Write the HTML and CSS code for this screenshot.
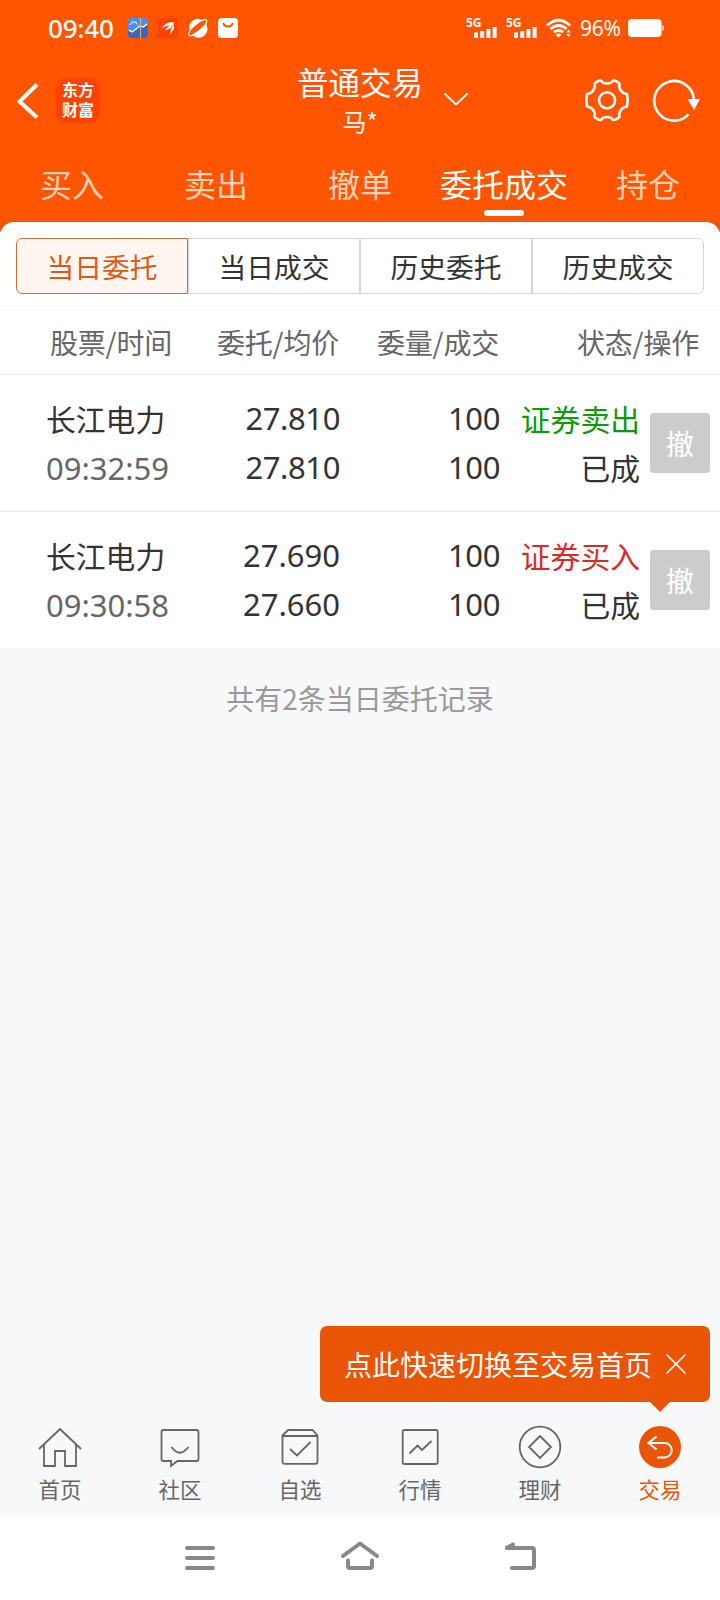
FILE: index.html
```html
<!DOCTYPE html>
<html lang="zh-CN">
<head>
  <meta charset="utf-8">
  <title>普通交易</title>
  <link rel="stylesheet" href="styles.css">
</head>
<body>
  <div class="app">

    <header class="top">
      <div class="status">
        <span class="clock">09:40</span>
        <svg class="note" width="20" height="20" viewBox="0 0 20 20">
          <rect width="20" height="20" rx="4" fill="#4b8df0"/>
          <path d="M0 13l4 1 8-6 3 2 5-3v9a4 4 0 0 1-4 4H4a4 4 0 0 1-4-4z" fill="#3768bd"/>
          <path d="M1 12l3 2 8-6 3 1 4-3" fill="none" stroke="#fff" stroke-width="1.2"/>
          <path d="M1.500 6.500l2-1 1-2 2 1.500 1-1.500L9 6.500" fill="none" stroke="#fff" stroke-width=".9"/>
          <path d="M12.500 0v20" stroke="#d8b47c"/>
        </svg>
        <svg class="note" width="20" height="20" viewBox="0 0 20 20">
          <rect width="20" height="20" rx="1" fill="#ff4200"/>
          <path d="M4 10C6 6 10 4 16 4l-4 3.500C9 7.500 7 8.500 4 10zM6.500 13.500c2-4 5-6 9.500-9l-3.500 6c-2 0-4 1-6 3zM12 16.500l1-5 3-6.500v6z" fill="#fff"/>
        </svg>
        <svg class="note" width="20" height="20" viewBox="0 0 20 20">
          <path d="M2 13A8.500 8.500 0 0 1 14.500 2.500C11 4.500 7 7.500 2 13zM4 16.500C9 14 14 10 17.500 5.500A8.500 8.500 0 0 1 4 16.500z" fill="#fff"/>
          <path d="M2 12c-3 6 0 7 5 4.500M13 3c6-3 7-1 4.500 4" fill="none" stroke="#fff" stroke-width="1.200"/>
        </svg>
        <svg class="note" width="20" height="20" viewBox="0 0 20 20">
          <rect width="20" height="20" rx="4" fill="#fff"/>
          <path d="M5.500 5.500c1 4 8 4 9 0" fill="none" stroke="#ff5500" stroke-width="1.800" stroke-linecap="round"/>
        </svg>
        <span class="space"></span>
        <span class="signal">
          <b>5G</b>
          <svg width="24" height="12" viewBox="0 0 24 12"><path d="M2 12V6.500M8.200 12V5M14.400 12V3M20.600 12V1" stroke="#fff" stroke-width="4"/></svg>
        </span>
        <span class="signal">
          <b>5G</b>
          <svg width="24" height="12" viewBox="0 0 24 12"><path d="M2 12V6.500M8.200 12V5M14.400 12V3M20.600 12V1" stroke="#fff" stroke-width="4"/></svg>
        </span>
        <svg class="wifi" width="26" height="20" viewBox="0 0 26 20">
          <path d="M1 7.500Q12.500-3 24 7.500M4.500 11Q12.500 4 20.500 11M8 14.200q4.500-3.500 9 0" fill="none" stroke="#fff" stroke-width="2.800"/>
          <path d="M9.500 16.500q3-2 6 0L12.500 19.500zM20.500 14.500l2-3 2 3zM20.500 16l2 3 2-3z" fill="#fff"/>
        </svg>
        <span class="percent">96%</span>
        <svg class="battery" width="36" height="18" viewBox="0 0 36 18">
          <rect width="33.500" height="18" rx="4" fill="#fff"/>
          <path d="M34 6q2 0 2 3t-2 3z" fill="#fff" opacity=".6"/>
        </svg>
      </div>

      <div class="bar">
        <div class="bar-left">
          <svg width="22" height="38" viewBox="0 0 22 38"><path d="M20 2.500L2.500 19.500l17.500 16" fill="none" stroke="#fff" stroke-width="4"/></svg>
          <div class="logo">东方<br>财富</div>
        </div>
        <div class="title">
          <h1>普通交易</h1>
          <p>马*</p>
        </div>
        <div class="bar-right">
          <svg class="chevron" width="26" height="16" viewBox="0 0 26 16"><path d="M1.500 1.500L13 12.500l11.500-11" fill="none" stroke="#fff" stroke-width="1.800"/></svg>
          <svg width="46" height="44" viewBox="0 0 46 44">
            <g fill="none" stroke="#fff" stroke-width="2.600" stroke-linejoin="round">
              <path d="M14.500 1.800L17 1.500C19 5.500 27 5.500 29 1.500l2.500.3 4 2.500C34 9.500 38 14.500 43 15Q44.500 21.500 43 27.500C38 28 34 33 35.500 38.200l-4 2.500-2.500.3C27 37 19 37 17 41l-2.500-.3-4-2.500C12 33 8 28 3 27.500Q1.500 21.500 3 15C8 14.500 12 9.500 10.500 4.300z"/>
              <circle cx="23" cy="21.300" r="8"/>
            </g>
          </svg>
          <svg width="48" height="44" viewBox="0 0 48 44">
            <path d="M36.500 35.300A19.800 19.800 0 1 1 41.800 21" fill="none" stroke="#fff" stroke-width="2.600"/>
            <path d="M35.500 20H48l-6 11z" fill="#fff"/>
          </svg>
        </div>
      </div>

      <nav class="tabs">
        <a>买入</a>
        <a>卖出</a>
        <a>撤单</a>
        <a class="active">委托成交</a>
        <a>持仓</a>
      </nav>
    </header>

    <main>
      <div class="sheet-wrap">
        <div class="sheet">
          <div class="segments">
            <button class="on">当日委托</button>
            <button>当日成交</button>
            <button>历史委托</button>
            <button>历史成交</button>
          </div>
        </div>
      </div>

      <div class="cols head">
        <span>股票/时间</span>
        <span>委托/均价</span>
        <span>委量/成交</span>
        <span class="last">状态/操作</span>
      </div>

      <div class="cols order">
        <div class="name">长江电力<br><span class="num time">09:32:59</span></div>
        <div class="num narrow">27.810<br>27.810</div>
        <div class="num narrow">100<br>100</div>
        <div><span class="sell">证券卖出</span><br>已成</div>
        <button class="cancel">撤</button>
      </div>
      <div class="cols order">
        <div class="name">长江电力<br><span class="num time">09:30:58</span></div>
        <div class="num">27.690<br>27.660</div>
        <div class="num narrow">100<br>100</div>
        <div><span class="buy">证券买入</span><br>已成</div>
        <button class="cancel">撤</button>
      </div>

      <p class="total">共有2条当日委托记录</p>
    </main>

    <footer class="bottom">
      <div class="tip">
        <span>点此快速切换至交易首页</span>
        <svg width="22" height="22" viewBox="0 0 22 22"><path d="M1.500 1.500l19 19M20.500 1.500l-19 19" stroke="#fff" stroke-width="1.700"/></svg>
      </div>
      <a>
        <svg width="44" height="44" viewBox="0 0 44 44"><path d="M1 24L22 4l21 20M6 19.500V41h11V26h10v15h11V19.500"/></svg>
        首页
      </a>
      <a>
        <svg width="44" height="44" viewBox="0 0 44 44"><path d="M5 5h33.500q2 0 2 2v27q0 2-2 2H19.500l-6.500 5V36H5.500q-2 0-2-2V7q0-2 1.500-2zM13.500 22q8 11.500 17 0"/></svg>
        社区
      </a>
      <a>
        <svg width="44" height="44" viewBox="0 0 44 44"><path d="M4.500 10.500L10 5h24.500l5 5.500v26q0 2.300-2 2.300h-31q-2 0-2-2.300zM4.500 11h35M12 24l7 6.500L32.500 17"/></svg>
        自选
      </a>
      <a>
        <svg width="44" height="44" viewBox="0 0 44 44"><rect x="4.700" y="5" width="35" height="34" rx="1.500"/><path d="M11.500 28.500l8-8 4.500 4.500 9.500-9"/></svg>
        行情
      </a>
      <a>
        <svg width="44" height="44" viewBox="0 0 44 44"><circle cx="22" cy="22" r="20.300"/><path d="M22 11l11 11-11 11-11-11z"/></svg>
        理财
      </a>
      <a class="active">
        <svg width="44" height="44" viewBox="0 0 44 44"><circle class="disc" cx="22" cy="22" r="21"/><path d="M18.500 11.500l-8 6.500 8 6.500M11 18h15.500a7 7 0 0 1 0 14.500H19"/></svg>
        交易
      </a>
    </footer>

    <div class="system">
      <svg width="30" height="40" viewBox="0 0 30 40"><path d="M2 12h26M2 22h26M2 32h26"/></svg>
      <svg width="40" height="40" viewBox="0 0 40 40"><path d="M3 20L20 7.500 37 20M8 24.500V30q0 2 2 2h20q2 0 2-2v-5.500"/></svg>
      <svg width="34" height="40" viewBox="0 0 34 40"><path d="M8 8.500L1.500 12H27q2 0 2 2v16q0 2-2 2H7"/></svg>
    </div>

  </div>
</body>
</html>
```
FILE: styles.css
```css
* {
  box-sizing: border-box;
}
body {
  margin: 0;
  background: #fff;
  color: #333;
  font-family: "Noto Sans CJK SC", "Noto Sans", sans-serif;
}
h1, p {
  margin: 0;
  font-weight: normal;
}
svg {
  display: block;
  flex: none;
}
button {
  padding: 0;
  font-family: inherit;
  color: inherit;
}
.app {
  width: 720px;
  height: 1600px;
  display: flex;
  flex-direction: column;
  overflow: hidden;
}

/* header */
.top {
  height: 222px;
  background: #ff5500;
  color: #fff;
}
.status {
  display: flex;
  align-items: center;
  height: 56px;
  padding: 0 56px 0 48px;
  font-family: "Noto Sans", sans-serif;
}
.clock {
  width: 80px;
  font-size: 26px;
  font-weight: 500;
  letter-spacing: -0.2px;
}
.note {
  margin-right: 10px;
}
.space {
  flex: 1;
}
.signal {
  width: 40px;
  height: 20px;
}
.signal b {
  display: block;
  height: 8px;
  font: bold 12px/10px "Noto Sans", sans-serif;
}
.signal svg {
  margin-left: 8px;
}
.wifi {
  margin-right: 8px;
}
.percent {
  width: 48px;
  font-size: 21px;
  letter-spacing: -0.3px;
}
.bar {
  display: grid;
  grid-template-columns: 1fr 128px 1fr;
  height: 94px;
}
.bar-left, .bar-right {
  display: flex;
  align-items: center;
  height: 90px;
}
.bar-left {
  padding-left: 17px;
  gap: 17px;
}
.logo {
  width: 44px;
  height: 45px;
  margin-top: -1px;
  padding-top: 2px;
  border-radius: 10px;
  background: #ff4200;
  font-size: 16px;
  font-weight: 700;
  line-height: 19.5px;
  text-align: center;
}
.title {
  padding-top: 4px;
  text-align: center;
}
.title h1 {
  font-size: 31.500px;
  line-height: 43px;
}
.title p {
  font-size: 24px;
  line-height: 36px;
}
.bar-right {
  padding-left: 19px;
}
.chevron {
  margin-top: -2px;
  margin-right: 115px;
}
.bar-right svg:last-child {
  margin-left: 22px;
}
.tabs {
  display: flex;
  height: 72px;
}
.tabs a {
  width: 144px;
  font-size: 32px;
  line-height: 67px;
  text-align: center;
  color: #ffd2b5;
}
.tabs .active {
  position: relative;
  color: #fff;
}
.tabs .active::after {
  content: "";
  position: absolute;
  left: 52px;
  top: 60px;
  width: 40px;
  height: 6px;
  border-radius: 3px;
  background: #fff;
}

/* order list */
main {
  flex: 1;
  background: #f7f8fa;
}
.sheet-wrap {
  background: linear-gradient(#eb5502 10px, #fff 10px);
}
.sheet {
  height: 88px;
  padding: 16px 16px 0;
  background: #fff;
  border-radius: 14px 14px 0 0;
  border-bottom: 1px solid #f5f5f5;
}
.segments {
  display: flex;
}
.segments button {
  flex: 1;
  height: 56px;
  border: 1px solid #d3d7d8;
  background: #fff;
  font-size: 27.700px;
  line-height: 54px;
}
.segments button:first-child {
  border-radius: 6px 0 0 6px;
}
.segments button:last-child {
  border-radius: 0 6px 6px 0;
}
.segments .on {
  border-color: #c8703a;
  background: #fff6f2;
  color: #dd5a12;
}
.cols {
  display: grid;
  grid-template-columns: 154px 140px 160px 140px 60px;
  padding-left: 46px;
  background: #fff;
  text-align: right;
}
.head {
  height: 65px;
  border-bottom: 1px solid #ebebeb;
  font-size: 28px;
  line-height: 65px;
  color: #666;
  letter-spacing: -0.2px;
}
.head span {
  margin-right: 1px;
}
.head span:first-child {
  padding-left: 4px;
  text-align: left;
  white-space: nowrap;
}
.head .last {
  grid-column: 4 / 6;
}
.order {
  height: 137px;
  padding-top: 19px;
  border-bottom: 1px solid #ebebeb;
  font-size: 29.800px;
  line-height: 49px;
}
.order + .order {
  height: 136px;
  border-bottom: 0;
}
.name {
  text-align: left;
}
.num {
  font-family: "Noto Sans", sans-serif;
  font-size: 31px;
}
.narrow {
  letter-spacing: -0.400px;
}
.time {
  color: #666;
}
.sell {
  color: #0a9a0a;
}
.buy {
  color: #d92a2a;
}
.cancel {
  width: 60px;
  height: 60px;
  margin: 19px 0 0 10px;
  border: 0;
  border-radius: 4px;
  background: #ccc;
  color: #fff;
  font-size: 28px;
}
.total {
  padding-top: 29px;
  font-size: 28px;
  line-height: 42px;
  text-align: center;
  color: #999;
}

/* bottom tabs */
.bottom {
  position: relative;
  display: flex;
  height: 102px;
  background: #f7f8fa;
}
.bottom a {
  width: 120px;
  padding-top: 11px;
  font-size: 21.500px;
  line-height: 40px;
  text-align: center;
  color: #666;
}
.bottom a svg {
  margin: 0 auto;
  fill: none;
  stroke: #666;
  stroke-width: 1.800;
}
.bottom .active {
  color: #e95504;
}
.bottom .active svg {
  stroke: #fff;
  stroke-width: 2;
}
.bottom .active .disc {
  fill: #e95504;
  stroke: none;
}
.tip {
  position: absolute;
  right: 10px;
  bottom: 114px;
  display: flex;
  align-items: center;
  justify-content: space-between;
  width: 390px;
  height: 76px;
  padding: 0 23px 0 24px;
  border-radius: 7px;
  background: #e95504;
  color: #fff;
  font-size: 28px;
  white-space: nowrap;
}
.tip::after {
  content: "";
  position: absolute;
  right: 40px;
  top: 76px;
  border: 10px solid transparent;
  border-top-color: #e95504;
  border-bottom: 0;
}

/* system keys */
.system {
  display: flex;
  gap: 125px;
  height: 84px;
  padding: 20px 0 0 185px;
}
.system svg {
  fill: none;
  stroke: #888;
  stroke-width: 4;
  stroke-linecap: round;
  stroke-linejoin: round;
}
```
